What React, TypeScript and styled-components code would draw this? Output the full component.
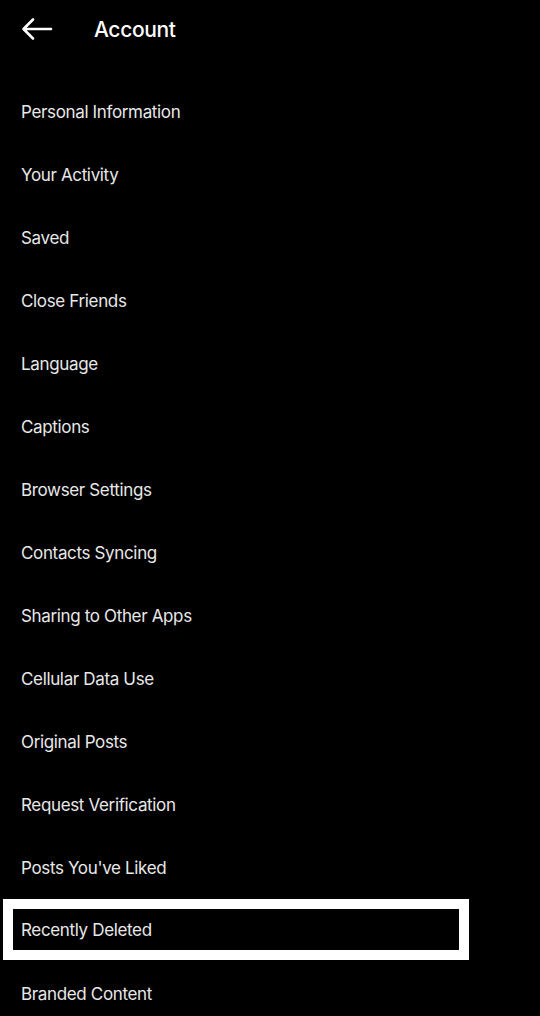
import styled, { createGlobalStyle } from 'styled-components'

const GlobalStyle = createGlobalStyle`
	html, body {
		margin: 0;
		padding: 0;
		background: #000;
	}
	body {
		font-family: Inter, 'Liberation Sans', Arial, sans-serif;
		-webkit-font-smoothing: antialiased;
	}
`

const Wrapper = styled.div`
	width: 540px;
	min-height: 1016px;
	background-color: #000;
	color: #f2f2f2;
	overflow: hidden;
`

const Header = styled.header`
	height: 58px;
	display: flex;
	align-items: center;
	padding-left: 20px;
`

const BackButton = styled.button`
	width: 34px;
	height: 34px;
	padding: 0;
	border: none;
	background: none;
	display: flex;
	align-items: center;
	justify-content: center;
	cursor: pointer;
`

const Title = styled.h1`
	margin: 0 0 0 40px;
	font-size: 21px;
	font-weight: 500;
	letter-spacing: -0.35px;
	color: #fff;
`

const List = styled.ul`
	list-style: none;
	margin: 0;
	padding: 22px 0 0;
`

const Item = styled.li<{ $active?: boolean }>`
	height: 63px;
	box-sizing: border-box;
	display: flex;
	align-items: center;
	padding-left: 21px;
	font-size: 17px;
	letter-spacing: -0.35px;
	color: #e8e8e8;

	${(props) =>
		props.$active &&
		`
		height: 61px;
		margin: 0 71px 2px 3px;
		padding-left: 8px;
		border: 10px solid #fff;
	`}
`

const items = [
	'Personal Information',
	'Your Activity',
	'Saved',
	'Close Friends',
	'Language',
	'Captions',
	'Browser Settings',
	'Contacts Syncing',
	'Sharing to Other Apps',
	'Cellular Data Use',
	'Original Posts',
	'Request Verification',
	"Posts You've Liked",
	'Recently Deleted',
	'Branded Content'
]

const App = () => {
	return (
		<Wrapper>
			<GlobalStyle />
			<Header>
				<BackButton aria-label="Back">
					<svg width="32" height="24" viewBox="0 0 32 24" fill="none">
						<path
							d="M30 12H3M12 2.5L2.5 12L12 21.5"
							stroke="#fff"
							strokeWidth="2.6"
							strokeLinecap="round"
							strokeLinejoin="round"
						/>
					</svg>
				</BackButton>
				<Title>Account</Title>
			</Header>
			<List>
				{items.map((item) => (
					<Item key={item} $active={item === 'Recently Deleted'}>
						{item}
					</Item>
				))}
			</List>
		</Wrapper>
	)
}

export default App
